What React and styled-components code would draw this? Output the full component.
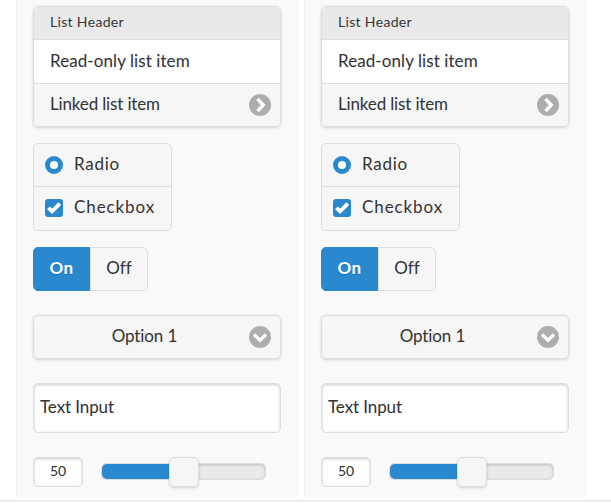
import React from "react";
import styled, { createGlobalStyle } from "styled-components";

const GlobalStyle = createGlobalStyle`
  *, *::before, *::after { box-sizing: border-box; }
  body {
    margin: 0;
    background: #fff;
    color: #333;
    font: 17px/20px Lato, "Open Sans", sans-serif;
    font-variant-ligatures: none;
    overflow: hidden;
  }
`;

const Page = styled.main`
  width: 611px;
  height: 503px;
  display: flex;
  flex-direction: column;
  overflow: hidden;
`;

const Columns = styled.div`
  height: 497px;
  padding-left: 16px;
  display: flex;
  gap: 6px;
`;

const Panel = styled.section`
  width: 282px;
  height: 497px;
  padding: 6px 16px 0;
  background: #f9f9f9;
  border: solid #f1f1f1;
  border-width: 0 1px;
  display: flex;
  flex-direction: column;
  align-items: flex-start;
`;

const Footer = styled.footer`
  height: 3px;
  margin-top: 3px;
  background: #f9f9f9;
  border-top: 1px solid #e4e4e4;
`;

const Label = styled.span`
  padding-bottom: 2px;
  font-size: ${(p) => p.$size || 17}px;
  letter-spacing: ${(p) => p.$track || 0}px;
  white-space: nowrap;
  text-shadow: ${(p) => (p.$light ? "0 1px 0 #1b6ca8" : "0 1px 0 #f3f3f3")};
`;

const ListView = styled.ul`
  width: 248px;
  height: 121px;
  margin: 0 0 16px;
  padding: 0;
  list-style: none;
  border: 1px solid #ddd;
  border-radius: 5px;
  box-shadow: 0 1px 3px rgba(0, 0, 0, 0.15);
  overflow: hidden;
`;

const ListRow = styled.li`
  height: ${(p) => p.$height}px;
  padding: 0 9px 0 16px;
  display: flex;
  align-items: center;
  justify-content: space-between;
  background: ${(p) => p.$fill};
  & + & { border-top: 1px solid #ddd; }
`;

const ControlGroup = styled.div`
  width: 139px;
  height: 88px;
  margin-bottom: 16px;
  border: 1px solid #ddd;
  border-radius: 5px;
  background: #f6f6f6;
`;

const ControlRow = styled.div`
  height: 42px;
  padding-left: 11px;
  display: flex;
  align-items: center;
  gap: 11px;
  & + & {
    height: 43px;
    border-top: 1px solid #ddd;
  }
`;

const Toggle = styled.div`
  width: 115px;
  height: 44px;
  margin-bottom: 24px;
  display: flex;
`;

const ToggleButton = styled.div`
  width: ${(p) => (p.$active ? 57 : 58)}px;
  display: flex;
  align-items: center;
  justify-content: center;
  border: 1px solid ${(p) => (p.$active ? "#2a89ce" : "#ddd")};
  border-radius: ${(p) => (p.$active ? "5px 0 0 5px" : "0 5px 5px 0")};
  background: ${(p) => (p.$active ? "#2a89ce" : "#f6f6f6")};
  color: ${(p) => (p.$active ? "#fff" : "#333")};
  font-weight: ${(p) => (p.$active ? 700 : 400)};
`;

const Select = styled.div`
  width: 248px;
  height: 44px;
  margin-bottom: 24px;
  padding: 0 9px 0 12px;
  display: flex;
  align-items: center;
  border: 1px solid #ddd;
  border-radius: 5px;
  background: #f6f6f6;
  box-shadow: 0 1px 3px rgba(0, 0, 0, 0.15);
`;

const SelectValue = styled.div`
  flex: 1;
  display: flex;
  justify-content: center;
  padding-right: 6px;
`;

const Field = styled.div`
  width: ${(p) => p.$width}px;
  height: ${(p) => p.$height}px;
  padding: 0 6px;
  display: flex;
  align-items: center;
  justify-content: ${(p) => (p.$center ? "center" : "flex-start")};
  border: 1px solid #ddd;
  border-radius: 5px;
  background: #fff;
  box-shadow: inset 0 1px 3px rgba(0, 0, 0, 0.2);
`;

const SliderRow = styled.div`
  margin-top: 24px;
  display: flex;
  align-items: flex-start;
  gap: 18px;
`;

const Track = styled.div`
  position: relative;
  width: 165px;
  height: 17px;
  margin-top: 6px;
  border: 1px solid #ddd;
  border-radius: 5px;
  background: #e9e9e9;
  box-shadow: inset 0 1px 3px rgba(0, 0, 0, 0.2);
`;

const TrackFill = styled.div`
  width: 50%;
  height: 15px;
  border-radius: 5px 0 0 5px;
  background: #2a89ce;
`;

const Handle = styled.div`
  position: absolute;
  top: -7px;
  left: 67px;
  width: 30px;
  height: 30px;
  border: 1px solid #ddd;
  border-radius: 5px;
  background: #f6f6f6;
  box-shadow: 0 1px 3px rgba(0, 0, 0, 0.15);
`;

const Icon = styled.svg`
  display: block;
  flex: none;
`;

const Arrow = ({ down }) => (
  <Icon width="22" height="22" viewBox="0 0 22 22">
    <circle cx="11" cy="11" r="11" fill="#adadad" />
    <path
      d={down ? "M5 8.5 11 14.3l6-5.8" : "M8.5 5 14.3 11l-5.8 6"}
      fill="none"
      stroke="#fff"
      strokeWidth="3.3"
    />
  </Icon>
);

const RadioMark = () => (
  <Icon width="18" height="18" viewBox="0 0 18 18">
    <circle cx="9" cy="9" r="9" fill="#2a89ce" />
    <circle cx="9" cy="9" r="4" fill="#fff" />
  </Icon>
);

const CheckMark = () => (
  <Icon width="18" height="18" viewBox="0 0 18 18">
    <rect width="18" height="18" rx="3" fill="#2a89ce" />
    <path d="m3.4 8.8 3.7 3.5 7.7-7.6" fill="none" stroke="#fff" strokeWidth="3.9" />
  </Icon>
);

const Demo = () => (
  <Panel>
    <ListView>
      <ListRow $height={32} $fill="#e9e9e9">
        <Label $size={14} $track={0.33}>List Header</Label>
      </ListRow>
      <ListRow $height={44} $fill="#fff">
        <Label $track={0.08}>Read-only list item</Label>
      </ListRow>
      <ListRow $height={43} $fill="#f6f6f6">
        <Label $track={-0.15}>Linked list item</Label>
        <Arrow />
      </ListRow>
    </ListView>
    <ControlGroup>
      <ControlRow>
        <RadioMark />
        <Label $track={0.75}>Radio</Label>
      </ControlRow>
      <ControlRow>
        <CheckMark />
        <Label $track={0.9}>Checkbox</Label>
      </ControlRow>
    </ControlGroup>
    <Toggle>
      <ToggleButton $active>
        <Label $light $track={0.3}>On</Label>
      </ToggleButton>
      <ToggleButton>
        <Label>Off</Label>
      </ToggleButton>
    </Toggle>
    <Select>
      <SelectValue>
        <Label $track={-0.1}>Option 1</Label>
      </SelectValue>
      <Arrow down />
    </Select>
    <Field $width={248} $height={50}>
      <Label $track={-0.1}>Text Input</Label>
    </Field>
    <SliderRow>
      <Field $width={50} $height={30} $center>
        <Label $size={14}>50</Label>
      </Field>
      <Track>
        <TrackFill />
        <Handle />
      </Track>
    </SliderRow>
  </Panel>
);

export default function App() {
  return (
    <>
      <GlobalStyle />
      <Page>
        <Columns>
          <Demo />
          <Demo />
        </Columns>
        <Footer />
      </Page>
    </>
  );
}
